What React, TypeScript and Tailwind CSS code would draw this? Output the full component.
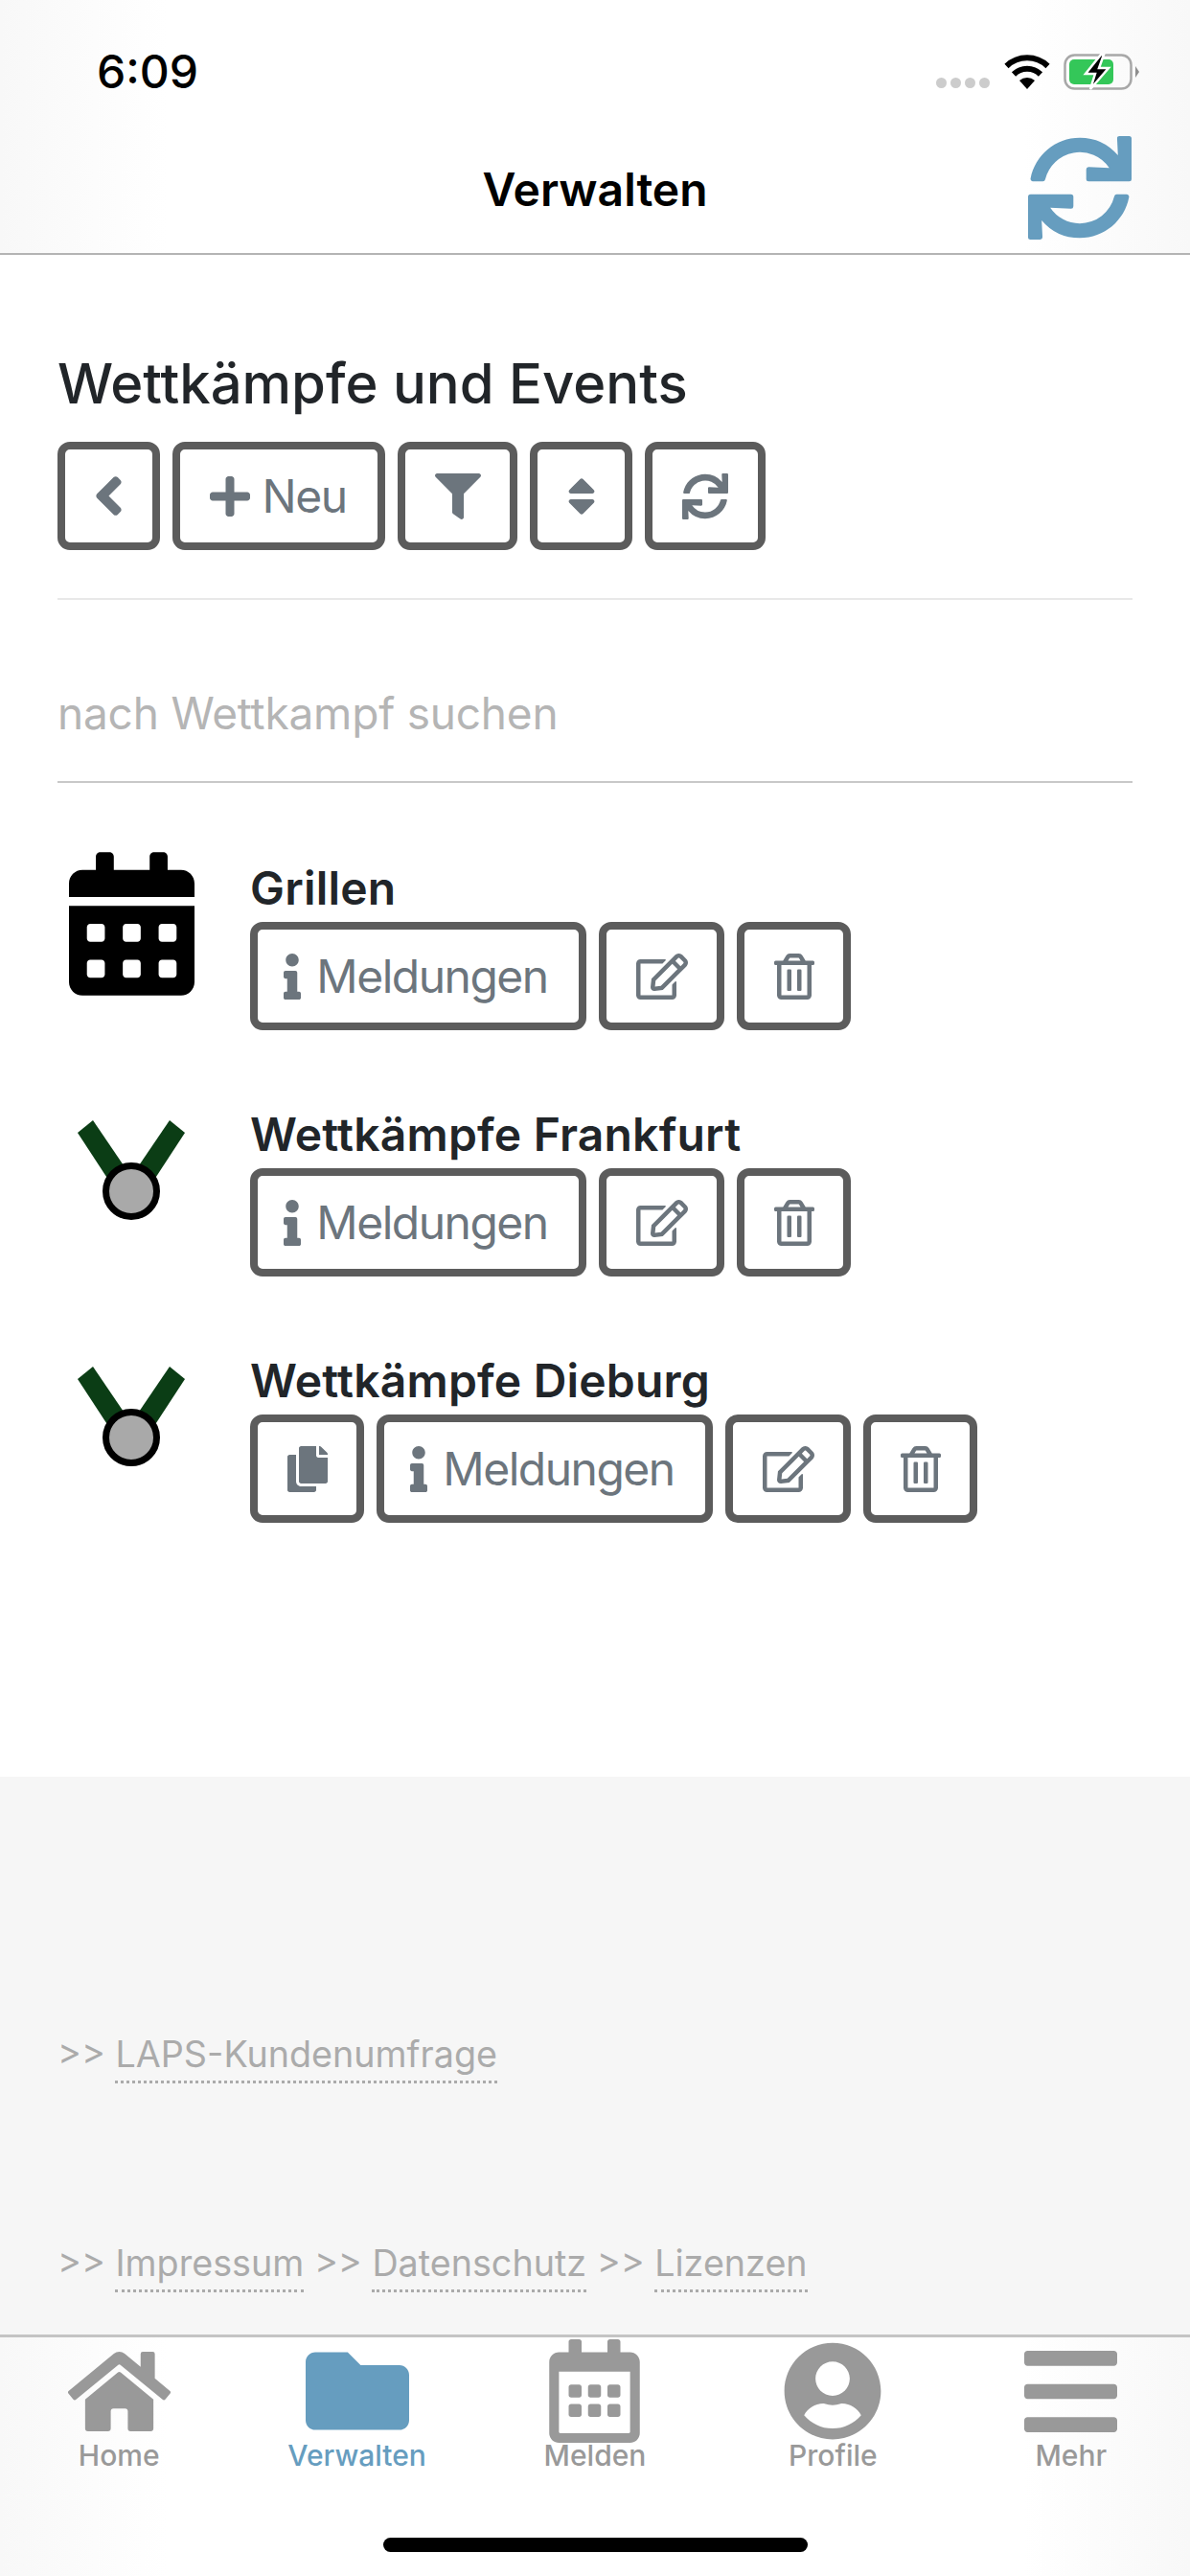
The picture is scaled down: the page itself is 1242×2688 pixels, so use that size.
// Verwalten screen: competitions and events list
import React from 'react';
import {
  FaAngleLeft,
  FaBars,
  FaCalendarAlt,
  FaCopy,
  FaFilter,
  FaFolder,
  FaHome,
  FaInfo,
  FaPlus,
  FaRegCalendarAlt,
  FaRegEdit,
  FaRegTrashAlt,
  FaSort,
  FaSync,
  FaUserCircle,
} from 'react-icons/fa';

const ToolButton = ({ width, children }: { width: string; children: React.ReactNode }) => (
  <button className={`${width} h-[113px] shrink-0 flex items-center justify-center border-[8px] border-[#5c5c5c] rounded-[13px] bg-white text-[#6c757d] text-[48px] leading-none tracking-[-1.5px]`}>
    {children}
  </button>
);

const Medal = () => (
  <svg width="112" height="104" viewBox="0 0 112 104" className="block">
    <polygon points="0,13 16,0 52,53 34,65" fill="#0b3d15" />
    <polygon points="112,13 96,0 60,53 78,65" fill="#0b3d15" />
    <circle cx="56" cy="74" r="26.5" fill="#a9a9a9" stroke="#000" strokeWidth="7" />
  </svg>
);

const MeldungenButton = () => (
  <ToolButton width="w-[351px]">
    <FaInfo className="w-[18px] h-[48px] mr-[16px]" />
    <span className="mr-[5px]">Meldungen</span>
  </ToolButton>
);

const EventRow = ({ icon, title, copy }: { icon: React.ReactNode; title: string; copy?: boolean }) => (
  <li className="flex">
    <div className="w-[154px] h-[128px] mr-[47px] flex items-center justify-center shrink-0">{icon}</div>
    <div>
      <h3 className="h-[62px] text-[48px] leading-[54px] font-semibold tracking-[0.2px] text-[#212529]">{title}</h3>
      <div className="flex gap-[13px]">
        {copy && (
          <ToolButton width="w-[119px]">
            <FaCopy className="w-[42px] h-[48px]" />
          </ToolButton>
        )}
        <MeldungenButton />
        <ToolButton width="w-[131px]">
          <FaRegEdit className="w-[54px] h-[48px]" />
        </ToolButton>
        <ToolButton width="w-[119px]">
          <FaRegTrashAlt className="w-[42px] h-[48px]" />
        </ToolButton>
      </div>
    </div>
  </li>
);

const FooterLink = ({ children }: { children: React.ReactNode }) => (
  <a className="border-b-[3px] border-dotted border-[#ababab] pb-[5px]">{children}</a>
);

const Tab = ({ label, active, children }: { label: string; active?: boolean; children: React.ReactNode }) => (
  <div className={`flex flex-col items-center ${active ? 'text-[#669dbf]' : 'text-[#999999]'}`}>
    <div className="h-[110px] flex items-center justify-center">{children}</div>
    <span className="text-[30px] leading-[24px] font-medium">{label}</span>
  </div>
);

const StatusIcons = () => (
  <div className="flex items-start">
    <div className="flex gap-[4px] mt-[31px]">
      <span className="w-[11px] h-[11px] rounded-full bg-[#cccccc]" />
      <span className="w-[11px] h-[11px] rounded-full bg-[#cccccc]" />
      <span className="w-[11px] h-[11px] rounded-full bg-[#cccccc]" />
      <span className="w-[11px] h-[11px] rounded-full bg-[#cccccc]" />
    </div>
    <svg width="48" height="36" viewBox="0 0 48 36" className="ml-[15px] mt-[7px]">
      <path d="M24 36 L16 27 A12 12 0 0 1 32 27 Z" fill="#000" />
      <path d="M10 20.5 A20 20 0 0 1 38 20.5" fill="none" stroke="#000" strokeWidth="6" />
      <path d="M2.5 12 A31 31 0 0 1 45.5 12" fill="none" stroke="#000" strokeWidth="6" />
    </svg>
    <svg width="80" height="38" viewBox="0 0 80 38" className="ml-[14px] mt-[6px]">
      <rect x="1.5" y="1.5" width="69" height="35" rx="10" fill="none" stroke="#a8a8a8" strokeWidth="2.5" />
      <path d="M75 13 L79 19 L75 25 Z" fill="#8e8e8e" />
      <rect x="6" y="6" width="46" height="26" rx="5" fill="#34c759" />
      <path d="M39 1 L23 21 H33 L28 37 L47 15 H37 L42 1 Z" fill="#000" stroke="#fff" strokeWidth="2.5" />
    </svg>
  </div>
);

export default function App() {
  return (
    <div className="w-[1242px] h-[2688px] flex flex-col bg-white font-['Inter','Liberation_Sans',sans-serif] overflow-hidden">
      <header className="h-[266px] shrink-0 border-b-2 border-[#b4b4b4] bg-[linear-gradient(to_right,#f8f8f8,#ffffff_14%,#ffffff_86%,#f8f8f8)]">
        <div className="h-[132px] pt-[50px] pl-[101px] pr-[52px] flex justify-between">
          <span className="text-[48px] leading-[50px] font-medium text-black">6:09</span>
          <StatusIcons />
        </div>
        <div className="h-[132px] pr-[61px] relative flex items-center justify-end">
          <span className="absolute inset-x-0 text-center text-[48px] leading-[56px] font-semibold text-black">Verwalten</span>
          <FaSync className="w-[108px] h-[108px] text-[#669dbf] -mt-[4px]" />
        </div>
      </header>

      <main className="flex-1 px-[60px] pt-[100px]">
        <h2 className="text-[58px] leading-[68px] font-medium text-[#212529]">Wettkämpfe und Events</h2>
        <div className="mt-[27px] flex gap-[13px]">
          <ToolButton width="w-[107px]">
            <FaAngleLeft className="w-[33px] h-[65px]" />
          </ToolButton>
          <ToolButton width="w-[222px]">
            <FaPlus className="w-[48px] h-[48px] mr-[9px]" />
            <span className="mr-[4px]">Neu</span>
          </ToolButton>
          <ToolButton width="w-[125px]">
            <FaFilter className="w-[48px] h-[48px]" />
          </ToolButton>
          <ToolButton width="w-[107px]">
            <FaSort className="w-[30px] h-[48px]" />
          </ToolButton>
          <ToolButton width="w-[126px]">
            <FaSync className="w-[48px] h-[48px]" />
          </ToolButton>
        </div>
        <hr className="mt-[50px] border-t-[2px] border-[#e8e8e8]" />
        <div className="h-[191px] flex items-center pt-[48px] border-b-2 border-[#c8c8c8] text-[46px] tracking-[-0.2px] text-[#b5b5b5]">
          nach Wettkampf suchen
        </div>
        <ul className="mt-[83px] flex flex-col gap-[82px]">
          <EventRow icon={<FaCalendarAlt className="w-[131px] h-[150px] text-black" />} title="Grillen" />
          <EventRow icon={<Medal />} title="Wettkämpfe Frankfurt" />
          <EventRow icon={<Medal />} title="Wettkämpfe Dieburg" copy />
        </ul>
      </main>

      <section className="h-[582px] shrink-0 bg-[#f6f6f6] px-[60px] pt-[265px] text-[37.7px] leading-[48px] text-[#ababab]">
        <p>
          &gt;&gt; <FooterLink>LAPS-Kundenumfrage</FooterLink>
        </p>
        <p className="mt-[170px]">
          &gt;&gt; <FooterLink>Impressum</FooterLink> &gt;&gt; <FooterLink>Datenschutz</FooterLink> &gt;&gt; <FooterLink>Lizenzen</FooterLink>
        </p>
      </section>

      <nav className="h-[252px] shrink-0 border-t-[3px] border-[#c4c4c4] bg-[linear-gradient(to_right,#f8f8f8,#ffffff_14%,#ffffff_86%,#f8f8f8)] flex flex-col">
        <div className="grid grid-cols-5 pt-[1px]">
          <Tab label="Home"><FaHome className="w-[107px] h-[95px]" /></Tab>
          <Tab label="Verwalten" active><FaFolder className="w-[108px] h-[108px]" /></Tab>
          <Tab label="Melden"><FaRegCalendarAlt className="w-[95px] h-[108px]" /></Tab>
          <Tab label="Profile"><FaUserCircle className="w-[104px] h-[104px]" /></Tab>
          <Tab label="Mehr"><FaBars className="w-[97px] h-[111px]" /></Tab>
        </div>
        <div className="mt-auto mb-[25px] mx-auto w-[443px] h-[15px] rounded-full bg-black" />
      </nav>
    </div>
  );
}
